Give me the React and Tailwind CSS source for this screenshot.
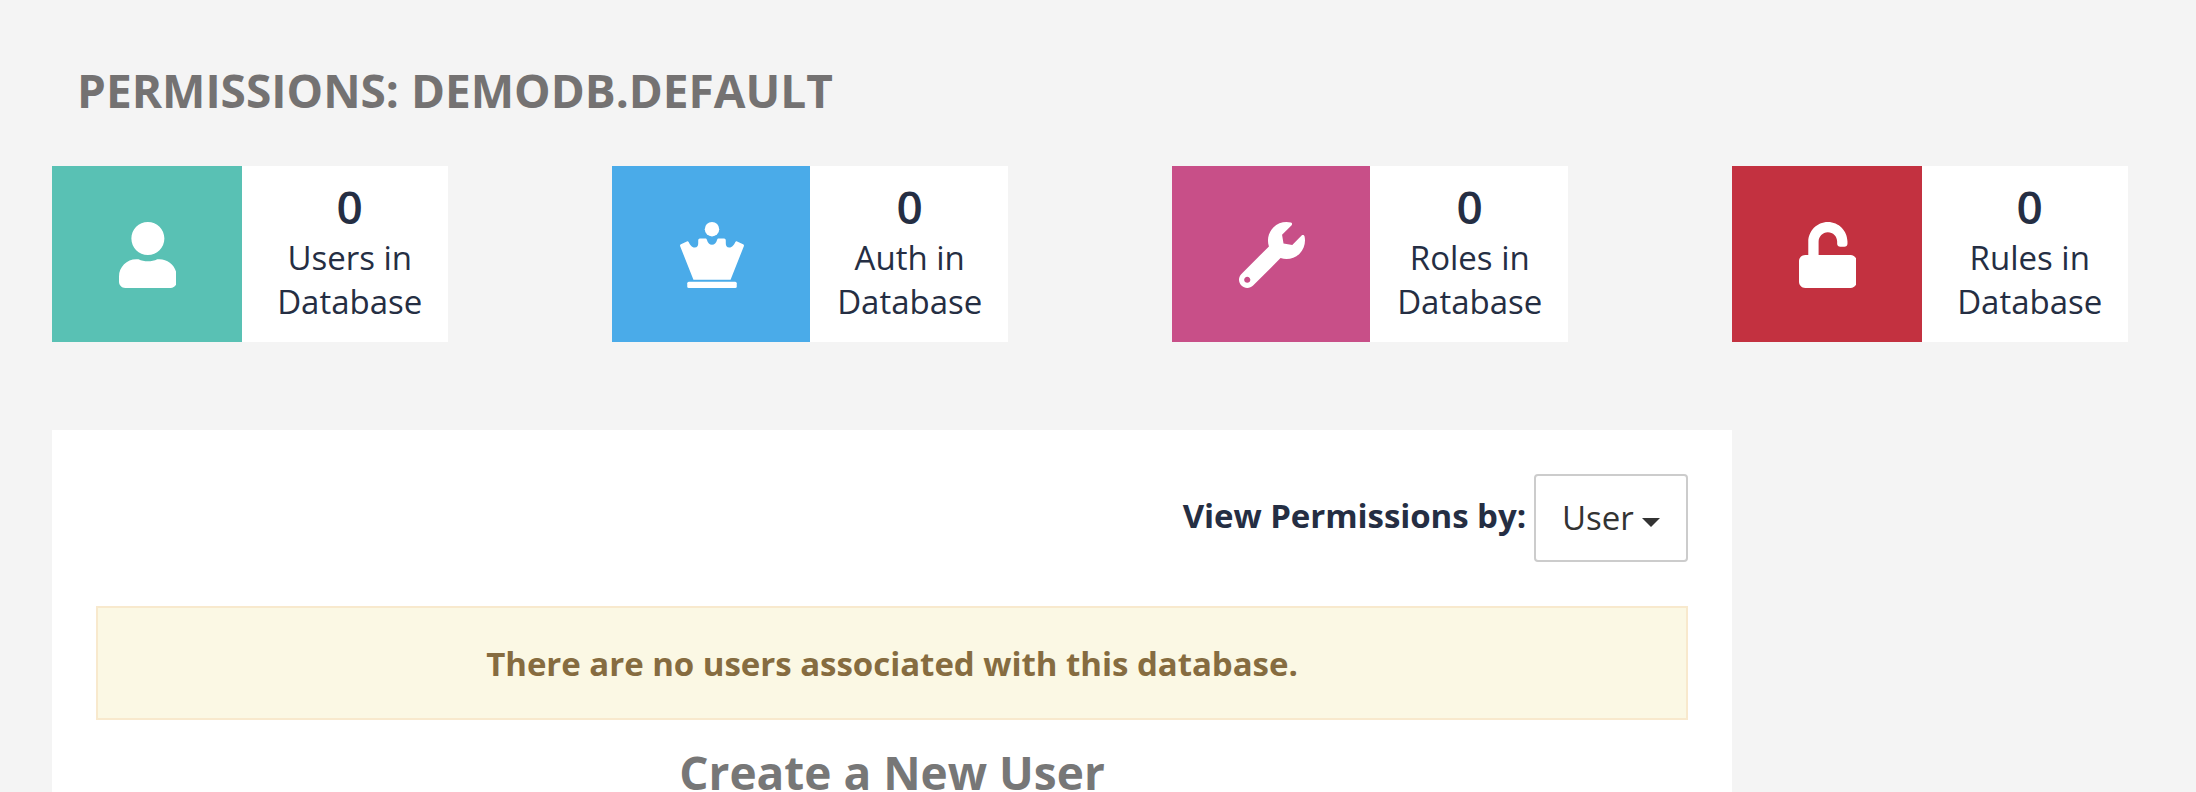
import { FaUser, FaWrench, FaUnlock } from 'react-icons/fa';

function QueenIcon({ className }) {
  return (
    <svg className={className} viewBox="0 0 512 512" fill="currentColor">
      <circle cx="256" cy="56" r="56" />
      <path d="M112 448L9 188c-3-7 0-13 6-16l46-21c6-3 11 0 15 6 10 20 22 41 46 41 20 0 27-16 27-34v-21c0-9 5-15 13-15h42c7 0 10 4 13 11 6 22 20 38 39 38s33-16 39-38c3-7 6-11 13-11h42c8 0 13 6 13 15v21c0 18 7 34 27 34 24 0 36-21 46-41 4-6 9-9 15-6l46 21c6 3 9 9 6 16L400 448z" />
      <rect x="64" y="464" width="384" height="48" rx="12" />
    </svg>
  );
}

const stats = [
  { label: 'Users', Icon: FaUser, box: 'w-[190px] bg-[#59c1b4]', icon: 'w-[57.75px]' },
  { label: 'Auth', Icon: QueenIcon, box: 'w-[198px] bg-[#4aabe9]', icon: 'w-[66px]' },
  { label: 'Roles', Icon: FaWrench, box: 'w-[198px] bg-[#c84f88]', icon: 'w-[66px]' },
  { label: 'Rules', Icon: FaUnlock, box: 'w-[190px] bg-[#c33140]', icon: 'w-[57.75px]' },
];

function StatCard({ label, Icon, box, icon }) {
  return (
    <div className="flex h-[176px] w-[396px] justify-between bg-white">
      <div className={`flex shrink-0 pt-14 pl-[66.6px] text-white ${box}`}>
        <Icon className={`h-[66px] shrink-0 ${icon}`} />
      </div>
      <div className="w-[198px] shrink-0 pt-[15px] pl-[1.5px] text-center">
        <div className="text-[46px] leading-[50px] font-semibold">0</div>
        <div className="mt-[5px] text-[33px] leading-[44px]">
          {label} in
          <br />
          Database
        </div>
      </div>
    </div>
  );
}

export default function App() {
  return (
    <div className="h-[792px] w-[2196px] overflow-hidden bg-[#f4f4f4] pt-[65px] pl-[52px] font-['Open_Sans',sans-serif] text-[#252e43]">
      <h1 className="pl-[25px] text-[46px] leading-[50px] font-bold text-[#747272] uppercase">
        Permissions: demodb.default
      </h1>

      <div className="mt-[51px] flex gap-[164px]">
        {stats.map((s) => (
          <StatCard key={s.label} {...s} />
        ))}
      </div>

      <div className="mt-[88px] h-[500px] w-[1680px] bg-white p-11">
        <div className="flex h-[88px] items-center justify-end gap-2">
          <span className="pb-1 text-[33px] leading-[44px] font-bold tracking-[-0.06px]">View Permissions by:</span>
          <button className="flex h-[88px] w-[154px] items-center rounded-[4px] border-2 border-[#ccc] bg-white pl-[26px] text-[33px] leading-[44px] text-[#333]">
            <span>User</span>
            <svg className="mt-2 ml-2 h-[9px] w-[18px] shrink-0" viewBox="0 0 18 9" fill="currentColor">
              <path d="M0 0h18L9 9z" />
            </svg>
          </button>
        </div>

        <div className="mt-11 flex h-[114px] items-center justify-center border-2 border-[#f8e9cd] bg-[#fbf8e4] pt-[2px] text-[33px] leading-[44px] font-bold tracking-[-0.03px] text-[#866c40]">
          There are no users associated with this database.
        </div>

        <h2 className="mt-[27px] text-center text-[46px] leading-[50px] font-bold text-[#777]">
          Create a New User
        </h2>
      </div>
    </div>
  );
}
